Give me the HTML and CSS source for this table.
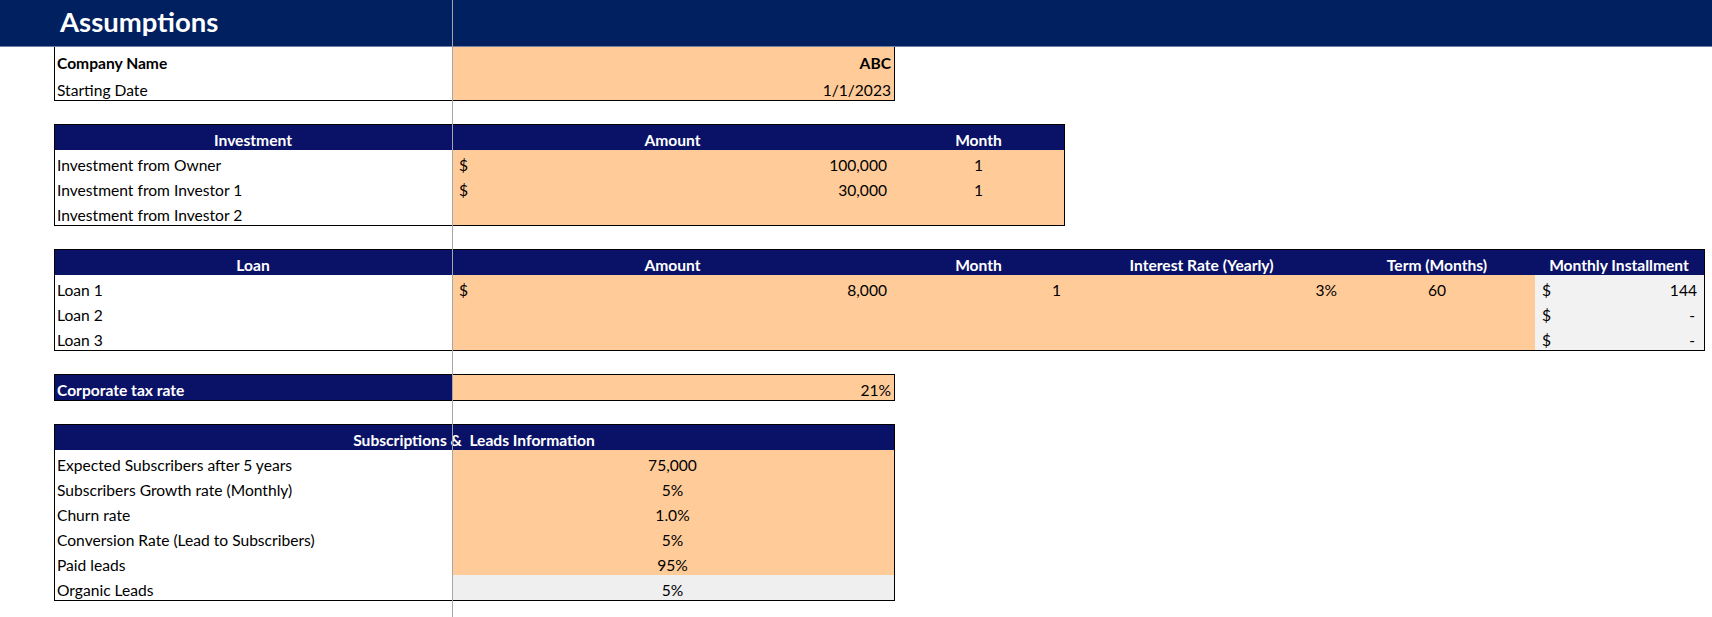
FILE: index.html
```html
<!DOCTYPE html>
<html lang="en">
<head>
<meta charset="utf-8">
<title>Assumptions</title>
<link rel="stylesheet" href="styles.css">
</head>
<body>
<div class="page">
  <header class="title-bar"><h1 class="title">Assumptions</h1></header>

  <main class="sheet">
    <section class="block block-company">
      <div class="c bold tall">Company Name</div>
      <div class="c peach r bold tall">ABC</div>
      <div class="c taller">Starting Date</div>
      <div class="c peach r taller">1/1/2023</div>
    </section>

    <section class="block block-invest">
      <div class="c head ctr">Investment</div>
      <div class="c head ctr">Amount</div>
      <div class="c head ctr">Month</div>

      <div class="c">Investment from Owner</div>
      <div class="c peach acct"><span>$</span><span>100,000</span></div>
      <div class="c peach ctr">1</div>

      <div class="c">Investment from Investor 1</div>
      <div class="c peach acct"><span>$</span><span>30,000</span></div>
      <div class="c peach ctr">1</div>

      <div class="c">Investment from Investor 2</div>
      <div class="c peach"></div>
      <div class="c peach"></div>
    </section>

    <section class="block block-loan">
      <div class="c head ctr">Loan</div>
      <div class="c head ctr">Amount</div>
      <div class="c head ctr">Month</div>
      <div class="c head ctr">Interest Rate (Yearly)</div>
      <div class="c head ctr">Term (Months)</div>
      <div class="c head ctr">Monthly Installment</div>

      <div class="c">Loan 1</div>
      <div class="c peach acct"><span>$</span><span>8,000</span></div>
      <div class="c peach r">1</div>
      <div class="c peach r">3%</div>
      <div class="c peach ctr">60</div>
      <div class="c gray acct"><span>$</span><span>144</span></div>

      <div class="c">Loan 2</div>
      <div class="c peach"></div>
      <div class="c peach"></div>
      <div class="c peach"></div>
      <div class="c peach"></div>
      <div class="c gray acct dash"><span>$</span><span>-</span></div>

      <div class="c">Loan 3</div>
      <div class="c peach"></div>
      <div class="c peach"></div>
      <div class="c peach"></div>
      <div class="c peach"></div>
      <div class="c gray acct dash"><span>$</span><span>-</span></div>
    </section>

    <section class="block block-tax">
      <div class="c head bold">Corporate tax rate</div>
      <div class="c peach r">21%</div>
    </section>

    <section class="block block-subs">
      <div class="c head ctr span2 pre">Subscriptions &amp;  Leads Information</div>

      <div class="c">Expected Subscribers after 5 years</div>
      <div class="c peach ctr">75,000</div>
      <div class="c">Subscribers Growth rate (Monthly)</div>
      <div class="c peach ctr">5%</div>
      <div class="c">Churn rate</div>
      <div class="c peach ctr">1.0%</div>
      <div class="c">Conversion Rate (Lead to Subscribers)</div>
      <div class="c peach ctr">5%</div>
      <div class="c">Paid leads</div>
      <div class="c peach ctr">95%</div>
      <div class="c">Organic Leads</div>
      <div class="c gray-light ctr">5%</div>
    </section>
  </main>

  <div class="freeze-line"></div>
</div>
</body>
</html>
```

FILE: styles.css
```css
html, body {
  margin: 0;
  padding: 0;
  background: #ffffff;
}

body {
  font-family: Lato, "Liberation Sans", sans-serif;
  font-size: 15.6px;
  color: #000000;
  height: 617px;
  overflow: hidden;
}

.page {
  position: relative;
  height: 617px;
}

.title-bar {
  height: 46px;
  background: #002060;
  border-bottom: 1px solid #6f7fa3;
  display: flex;
  align-items: center;
  padding-left: 60px;
}

.title {
  margin: 0;
  font-size: 27.5px;
  font-weight: 700;
  color: #ffffff;
  line-height: 1;
  padding-bottom: 3px;
}

.sheet {
  padding-left: 54px;
  display: flex;
  flex-direction: column;
  align-items: flex-start;
}

.block {
  display: grid;
  border: 1px solid #000000;
  grid-auto-rows: 25px;
  margin-top: 23px;
}

.block-company {
  margin-top: 0;
  border-top: none;
  grid-template-columns: 397px 442px;
  grid-auto-rows: auto;
}

.block-invest {
  grid-template-columns: 397px 442px 170px;
}

.block-loan {
  grid-template-columns: 397px 442px 170px 276px 195px 169px;
}

.block-tax {
  grid-template-columns: 397px 442px;
}

.block-subs {
  grid-template-columns: 397px 442px;
}

.c {
  height: 25px;
  box-sizing: border-box;
  display: flex;
  align-items: flex-end;
  padding: 0 3px 1px 2px;
  line-height: 18px;
  white-space: nowrap;
}

.tall { height: 26px; }
.taller { height: 27px; }

.bold { font-weight: 700; }

.peach { background: #ffcc99; }
.gray { background: #f2f2f2; }
.gray-light { background: #efefef; }

.head {
  background: #0a1268;
  color: #ffffff;
  font-weight: 700;
}

.r { justify-content: flex-end; }
.ctr { justify-content: center; }

.acct {
  justify-content: space-between;
  padding: 0 7px 1px 7px;
}

.acct.dash { padding-right: 9px; }

.span2 { grid-column: 1 / span 2; }
.pre { white-space: pre; }

.freeze-line {
  position: absolute;
  left: 452px;
  top: 0;
  width: 1px;
  height: 617px;
  background: #a6a6a6;
}
```
